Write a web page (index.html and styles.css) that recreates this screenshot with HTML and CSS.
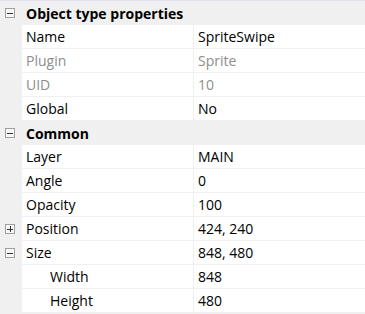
FILE: index.html
```html
<!DOCTYPE html>
<html>
<head lang="en">
    <meta charset="UTF-8">
    <title>Properties</title>
    <link rel="stylesheet" href="styles.css">
</head>
<body>
<div class="props">
    <!-- Object type properties -->
    <div class="cat">
        <span class="toggle minus"></span>
        <span class="cat-name">Object type properties</span>
    </div>
    <div class="row">
        <span class="gutter"></span>
        <span class="key">Name</span>
        <span class="val">SpriteSwipe</span>
    </div>
    <div class="row off">
        <span class="gutter"></span>
        <span class="key">Plugin</span>
        <span class="val">Sprite</span>
    </div>
    <div class="row off">
        <span class="gutter"></span>
        <span class="key">UID</span>
        <span class="val">10</span>
    </div>
    <div class="row">
        <span class="gutter"></span>
        <span class="key">Global</span>
        <span class="val">No</span>
    </div>

    <!-- Common -->
    <div class="cat">
        <span class="toggle minus"></span>
        <span class="cat-name">Common</span>
    </div>
    <div class="row">
        <span class="gutter"></span>
        <span class="key">Layer</span>
        <span class="val">MAIN</span>
    </div>
    <div class="row">
        <span class="gutter"></span>
        <span class="key">Angle</span>
        <span class="val">0</span>
    </div>
    <div class="row">
        <span class="gutter"></span>
        <span class="key">Opacity</span>
        <span class="val">100</span>
    </div>
    <div class="row">
        <span class="gutter"><span class="toggle plus"></span></span>
        <span class="key">Position</span>
        <span class="val">424, 240</span>
    </div>
    <div class="row">
        <span class="gutter"><span class="toggle minus"></span></span>
        <span class="key">Size</span>
        <span class="val">848, 480</span>
    </div>
    <div class="row sub">
        <span class="gutter"></span>
        <span class="key">Width</span>
        <span class="val">848</span>
    </div>
    <div class="row sub">
        <span class="gutter"></span>
        <span class="key">Height</span>
        <span class="val">480</span>
    </div>
</div>
</body>
</html>
```

FILE: styles.css
```css
* {
    padding: 0;
    margin: 0;
    box-sizing: border-box;
}

body {
    background-color: #f0f0f0;
    font-family: "Open Sans", "Noto Sans", sans-serif;
    font-size: 14px;
    color: #000;
}

.props {
    width: 365px;
    height: 314px;
    background-color: #f0f0f0;
    border-top: 1px solid #e3e3ee;
}

.cat {
    display: flex;
    align-items: center;
    height: 24px;
    padding-left: 5px;
}

.cat-name {
    margin-left: 11px;
    font-weight: bold;
}

.row {
    display: grid;
    grid-template-columns: 22px 172px 1fr;
    height: 24px;
}

.gutter {
    display: flex;
    align-items: center;
    padding-left: 5px;
}

.key,
.val {
    display: flex;
    align-items: center;
    background-color: #fff;
    border-bottom: 1px solid #f0f0f0;
    padding-left: 4px;
    white-space: nowrap;
}

.key {
    border-right: 1px solid #f0f0f0;
}

.sub .key {
    padding-left: 28px;
}

.off .key,
.off .val {
    color: #8d8d8d;
}

/* 展开/收起的小方框 */
.toggle {
    position: relative;
    width: 10px;
    height: 10px;
    border: 1px solid #a0a0a0;
    background-color: #f7f7f7;
}

.toggle::before,
.toggle::after {
    content: "";
    position: absolute;
    background-color: #333;
}

.toggle::before {
    left: 1px;
    top: 3.5px;
    width: 6px;
    height: 1px;
}

.plus::after {
    left: 3.5px;
    top: 1px;
    width: 1px;
    height: 6px;
}
```
